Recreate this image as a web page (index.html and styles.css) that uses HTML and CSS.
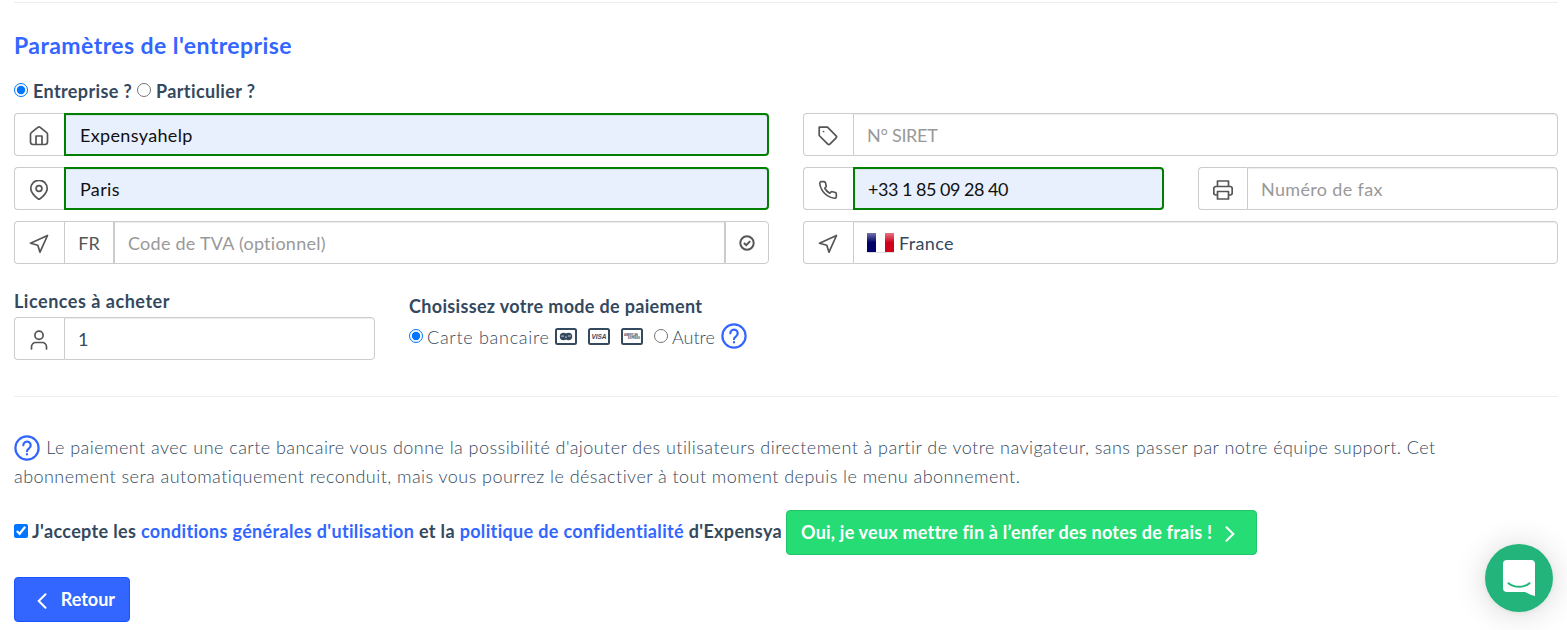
FILE: index.html
```html
<!DOCTYPE html>
<html lang="fr">
<head>
    <meta charset="UTF-8">
    <meta name="viewport" content="width=device-width, initial-scale=1.0">
    <title>Abonnement</title>
    <link rel="stylesheet" href="styles.css">
</head>
<body>
    <hr class="separator">

    <h2 class="title">Paramètres de l'entreprise</h2>

    <form class="form">
        <div class="account-type">
            <input type="radio" id="entreprise" name="type" checked>
            <label class="label-entreprise" for="entreprise">Entreprise ?</label>
            <input type="radio" id="particulier" name="type">
            <label for="particulier">Particulier ?</label>
        </div>

        <div class="fields">
            <div class="input-group">
                <span class="addon">
                    <svg class="icon" viewBox="0 0 20 20"><path d="M4.200 18.500h11.600a2.700 2.700 0 0 0 2.700-2.700V8.200a2 2 0 0 0-.8-1.600L11.200 1.400a2 2 0 0 0-2.400 0L2.300 6.600a2 2 0 0 0-.8 1.600v7.600a2.700 2.700 0 0 0 2.700 2.700zM7 18.500V10h6v8.500"/></svg>
                </span>
                <input type="text" class="field valid" value="Expensyahelp">
            </div>
            <div class="input-group">
                <span class="addon">
                    <svg class="icon" viewBox="0 0 20 20"><path d="M1.200 1.200h8.300l8.600 8.600a1.500 1.500 0 0 1 0 2.100l-6.200 6.200a1.500 1.500 0 0 1-2.100 0L1.200 9.500z"/><path d="M5.500 5.500h.1"/></svg>
                </span>
                <input type="text" class="field field-siret" placeholder="N° SIRET">
            </div>

            <div class="input-group">
                <span class="addon">
                    <svg class="icon" viewBox="0 0 20 20"><path d="M18.200 8.500c0 5.600-8.200 11-8.200 11s-8.200-5.400-8.200-11a8.200 8.200 0 0 1 16.400 0z"/><circle cx="10" cy="8.500" r="2.900"/></svg>
                </span>
                <input type="text" class="field valid" value="Paris">
            </div>
            <div class="split">
                <div class="input-group">
                    <span class="addon">
                        <svg class="icon icon-phone" viewBox="0 0 24 24"><path d="M22 16.900v3a2 2 0 0 1-2.200 2 19.800 19.800 0 0 1-8.600-3.100 19.500 19.500 0 0 1-6-6 19.800 19.800 0 0 1-3.100-8.600A2 2 0 0 1 4.100 2h3a2 2 0 0 1 2 1.700c.1 1 .4 1.900.7 2.800a2 2 0 0 1-.5 2.100L8.100 9.900a16 16 0 0 0 6 6l1.300-1.300a2 2 0 0 1 2.100-.4c.9.300 1.800.5 2.800.7a2 2 0 0 1 1.700 2z"/></svg>
                    </span>
                    <input type="text" class="field valid field-phone" value="+33 1 85 09 28 40">
                </div>
                <div class="input-group">
                    <span class="addon addon-fax">
                        <svg class="icon" viewBox="0 0 20 20"><path d="M4.500 6.500V1h11v5.500M4.500 15H2.700A1.900 1.900 0 0 1 .8 13.100V8.400a1.900 1.900 0 0 1 1.900-1.900h14.600a1.900 1.900 0 0 1 1.900 1.900v4.700a1.900 1.900 0 0 1-1.900 1.900h-1.800M4.500 11.500h11V19h-11z"/></svg>
                    </span>
                    <input type="text" class="field" placeholder="Numéro de fax">
                </div>
            </div>

            <div class="input-group">
                <span class="addon">
                    <svg class="icon" viewBox="0 0 20 20"><path d="M18.500 1.500L11 18.200 8.800 11.200 1.500 9.200z"/></svg>
                </span>
                <span class="addon addon-country">FR</span>
                <input type="text" class="field field-vat" placeholder="Code de TVA (optionnel)">
                <span class="addon addon-check">
                    <svg class="icon-check" viewBox="0 0 16 16"><circle cx="8" cy="8" r="6.700"/><path d="M4.900 8l2.300 2.200 4-4.100"/></svg>
                </span>
            </div>
            <div class="input-group">
                <span class="addon">
                    <svg class="icon" viewBox="0 0 20 20"><path d="M18.500 1.500L11 18.200 8.800 11.200 1.500 9.200z"/></svg>
                </span>
                <div class="field field-select"><span class="flag"></span>France</div>
            </div>
        </div>

        <div class="purchase">
            <div class="licences">
                <label class="block-label label-licences" for="licences">Licences à acheter</label>
                <div class="input-group">
                    <span class="addon">
                        <svg class="icon" viewBox="0 0 20 20"><circle cx="10" cy="5.300" r="4.100"/><path d="M2.500 19v-2.300A4.200 4.200 0 0 1 6.700 12.500h6.600a4.200 4.200 0 0 1 4.200 4.200V19"/></svg>
                    </span>
                    <input type="text" id="licences" class="field field-number" value="1">
                </div>
            </div>
            <div class="payment">
                <span class="block-label">Choisissez votre mode de paiement</span>
                <div class="payment-options">
                    <input type="radio" id="carte" name="paiement" checked>
                    <label class="label-card" for="carte">Carte bancaire</label>
                    <svg class="card" viewBox="0 0 22 17"><rect class="card-frame" x="1" y="1" width="20" height="15" rx="1.500"/><circle class="card-fill" cx="8.500" cy="8.500" r="3.700"/><circle class="card-fill" cx="13.500" cy="8.500" r="3.700"/><path class="card-line" d="M6 8.100h3M10 9.100h2M13 8h3"/></svg>
                    <svg class="card" viewBox="0 0 22 17"><rect class="card-frame" x="1" y="1" width="20" height="15" rx="1.500"/><text class="card-text" x="11" y="11" textLength="15">VISA</text></svg>
                    <svg class="card" viewBox="0 0 22 17"><rect class="card-frame" x="1" y="1" width="20" height="15" rx="1.500"/><text class="card-amex" x="10" y="8" textLength="14" lengthAdjust="spacingAndGlyphs">AMERICAN</text><text class="card-amex" x="13" y="11" textLength="12" lengthAdjust="spacingAndGlyphs">EXPRESS</text></svg>
                    <input type="radio" id="autre" name="paiement">
                    <label class="label-other" for="autre">Autre</label>
                    <svg class="help" viewBox="0 0 26 26"><circle cx="13" cy="13" r="11.600"/><path d="M9.300 10.300a3.700 3.700 0 1 1 5.800 3c-1.300.9-2.100 1.500-2.100 2.900M13 19.100v.4"/></svg>
                </div>
            </div>
        </div>

        <hr class="separator">

        <p class="notice">
            <svg class="help" viewBox="0 0 26 26"><circle cx="13" cy="13" r="11.600"/><path d="M9.300 10.300a3.700 3.700 0 1 1 5.800 3c-1.300.9-2.100 1.500-2.100 2.900M13 19.100v.4"/></svg>
            Le paiement avec une carte bancaire vous donne la possibilité d'ajouter des utilisateurs directement à partir de votre navigateur, sans passer par notre équipe support. Cet<br>
            abonnement sera automatiquement reconduit, mais vous pourrez le désactiver à tout moment depuis le menu abonnement.
        </p>

        <div class="accept">
            <input type="checkbox" id="cgu" checked>
            <label for="cgu">J'accepte les <a href="#">conditions générales d'utilisation</a> et la <a href="#">politique de confidentialité</a> d'Expensya</label>
            <button type="button" class="btn btn-success">
                <span>Oui, je veux mettre fin à l’enfer des notes de frais !</span>
                <svg class="chevron" viewBox="0 0 10 16"><path d="M1.500 1.200L8.300 8l-6.800 6.800"/></svg>
            </button>
        </div>

        <button type="button" class="btn btn-back">
            <svg class="chevron" viewBox="0 0 10 16"><path d="M8.500 1.200L1.700 8l6.800 6.800"/></svg>
            <span>Retour</span>
        </button>
    </form>

    <div class="chat">
        <svg class="chat-icon" viewBox="0 0 32 36"><path class="chat-bubble" d="M4 0h24a4 4 0 0 1 4 4v32c-4-1-7-2.500-10-4H4a4 4 0 0 1-4-4V4a4 4 0 0 1 4-4z"/><path class="chat-smile" d="M5.500 23.200c6 4.800 15 4.800 21 0"/></svg>
    </div>
</body>
</html>
```

FILE: styles.css
```css
* {
    box-sizing: border-box;
}
body {
    font-family: Lato, "Open Sans", sans-serif;
    font-size: 18px;
    color: #34495e;
    background-color: white;
    margin: 0;
    padding: 2px 9px 0 14px;
    height: 630px;
    overflow: hidden;
}
.separator {
    border: none;
    border-top: 1px solid #eee;
    margin: 0;
}
.title {
    margin: 27px 0 0;
    font-size: 23px;
    line-height: 30px;
    font-weight: bold;
    color: #36f;
    letter-spacing: 0.43px;
}
input[type="radio"], input[type="checkbox"] {
    width: 14px;
    height: 14px;
    margin: 0;
    flex: none;
}
.account-type {
    display: flex;
    align-items: center;
    height: 24px;
    margin: 19px 0 10px;
    font-weight: bold;
    letter-spacing: 0.38px;
    white-space: nowrap;
}
.account-type input {
    margin-bottom: 2px;
}
.account-type label {
    margin-left: 5px;
}
.account-type .label-entreprise {
    width: 100px;
    margin-right: 4px;
}
.fields {
    display: grid;
    grid-template-columns: 755px 755px;
    column-gap: 34px;
    row-gap: 11px;
}
.split {
    display: grid;
    grid-template-columns: 361px 360px;
    column-gap: 34px;
}
.input-group {
    display: flex;
    height: 43px;
}
.addon {
    display: flex;
    align-items: center;
    justify-content: center;
    width: 50px;
    flex: none;
    border: 1px solid #ccc;
    border-right: none;
    border-radius: 4px 0 0 4px;
    color: #555;
}
.icon {
    width: 20px;
    height: 20px;
    margin: 2px 1px 0 0;
    fill: none;
    stroke: #555;
    stroke-width: 1.7;
    stroke-linecap: round;
    stroke-linejoin: round;
}
.icon-phone {
    stroke-width: 2;
}
.addon-country {
    width: 49px;
    border-radius: 0;
}
.addon-fax {
    width: 49px;
}
.addon-check {
    width: 44px;
    border-right: 1px solid #ccc;
    border-radius: 0 4px 4px 0;
}
.icon-check {
    width: 16px;
    height: 16px;
    fill: none;
    stroke: #555;
    stroke-width: 2;
}
.field {
    flex: 1;
    min-width: 0;
    border: 1px solid #ccc;
    border-radius: 0 4px 4px 0;
    padding: 1px 14px 0 13px;
    background-color: white;
    box-shadow: inset 0 1px 1px rgba(0, 0, 0, 0.075);
    font: inherit;
    letter-spacing: 0.35px;
    color: #34495e;
    outline: none;
}
.field::placeholder {
    color: #999;
    opacity: 1;
}
.field.valid {
    border: 2px solid green;
    padding-left: 14px;
    background-color: #e8f0fe;
    color: #111;
}
.field.field-siret {
    letter-spacing: -0.3px;
}
.field.field-phone {
    padding-left: 13px;
    letter-spacing: -0.5px;
}
.field-vat {
    border-width: 1px 1px 1px 2px;
    border-radius: 0;
    letter-spacing: 0.25px;
}
.field-select {
    display: flex;
    align-items: center;
    padding: 0 13px;
}
.flag {
    width: 27px;
    height: 20px;
    margin-right: 5px;
    background: linear-gradient(rgba(255, 255, 255, 0.45), rgba(255, 255, 255, 0) 50%), linear-gradient(90deg, #006 0 9px, #fff 9px 18px, #d0021b 18px);
    border-bottom: 1px solid #ddd;
}
.purchase {
    display: flex;
    gap: 34px;
    height: 132px;
    padding-top: 26px;
}
.licences {
    width: 361px;
}
.block-label {
    display: block;
    height: 27px;
    line-height: 22px;
    font-weight: bold;
    letter-spacing: 0.33px;
}
.label-licences {
    letter-spacing: 0.52px;
}
.payment {
    padding-top: 5px;
}
.payment-options {
    display: flex;
    align-items: center;
    height: 28px;
    font-weight: 300;
    white-space: nowrap;
}
.payment-options label {
    padding-top: 2px;
}
.label-card {
    width: 122px;
    margin: 0 6px 0 4px;
    letter-spacing: 0.72px;
}
.card {
    width: 22px;
    height: 17px;
    margin-right: 11px;
}
.card-frame {
    fill: none;
    stroke: #34495e;
    stroke-width: 2;
}
.card-fill {
    fill: #34495e;
}
.card-line {
    stroke: white;
    stroke-width: 0.7;
}
.card-text, .card-amex {
    font-family: "Liberation Sans", sans-serif;
    font-size: 6.500px;
    font-weight: bold;
    font-style: italic;
    text-anchor: middle;
    fill: #34495e;
}
.card-amex {
    font-size: 3px;
    font-style: normal;
}
.label-other {
    width: 43px;
    margin: 0 6px 0 4px;
}
.help {
    width: 26px;
    height: 26px;
    fill: none;
    stroke: #36f;
    stroke-width: 2.2;
    stroke-linecap: round;
}
.notice {
    margin: 36px 0 0;
    height: 77px;
    line-height: 29px;
    font-weight: 300;
    letter-spacing: 0.45px;
    white-space: nowrap;
}
.notice .help {
    vertical-align: top;
    margin: 2px 1px -4px 0;
}
.accept {
    display: flex;
    align-items: center;
    height: 45px;
    font-weight: bold;
    letter-spacing: 0.34px;
    white-space: nowrap;
}
.accept input {
    margin-bottom: 4px;
}
.accept label {
    width: 750px;
    margin: 0 4px;
    padding-bottom: 3px;
}
.accept a {
    color: #36f;
    text-decoration: none;
}
.btn {
    display: flex;
    align-items: center;
    height: 45px;
    border: 1px solid #2b5bf0;
    border-radius: 4px;
    font: inherit;
    font-weight: bold;
    color: white;
    white-space: nowrap;
    cursor: pointer;
}
.btn span {
    padding-bottom: 2px;
}
.btn-success {
    width: 471px;
    padding: 0 21px 0 14px;
    justify-content: space-between;
    letter-spacing: 0.22px;
    background-color: #26dc74;
    border-color: #22c668;
}
.btn-back {
    width: 116px;
    margin-top: 22px;
    padding: 0 14px 0 22px;
    justify-content: space-between;
    background-color: #36f;
    border-color: #1a53ff;
}
.chevron {
    width: 10px;
    height: 16px;
    margin-top: 3px;
    fill: none;
    stroke: white;
    stroke-width: 2;
    stroke-linecap: round;
}
.chat {
    position: fixed;
    right: 14px;
    bottom: 18px;
    width: 68px;
    height: 68px;
    border-radius: 50%;
    background-color: #23b47b;
    box-shadow: 0 1px 6px rgba(0, 0, 0, 0.06), 0 2px 32px rgba(0, 0, 0, 0.16);
    display: flex;
    align-items: center;
    justify-content: center;
}
.chat-icon {
    width: 32px;
    height: 36px;
}
.chat-bubble {
    fill: white;
}
.chat-smile {
    fill: none;
    stroke: #23b47b;
    stroke-width: 2;
    stroke-linecap: round;
}
```
